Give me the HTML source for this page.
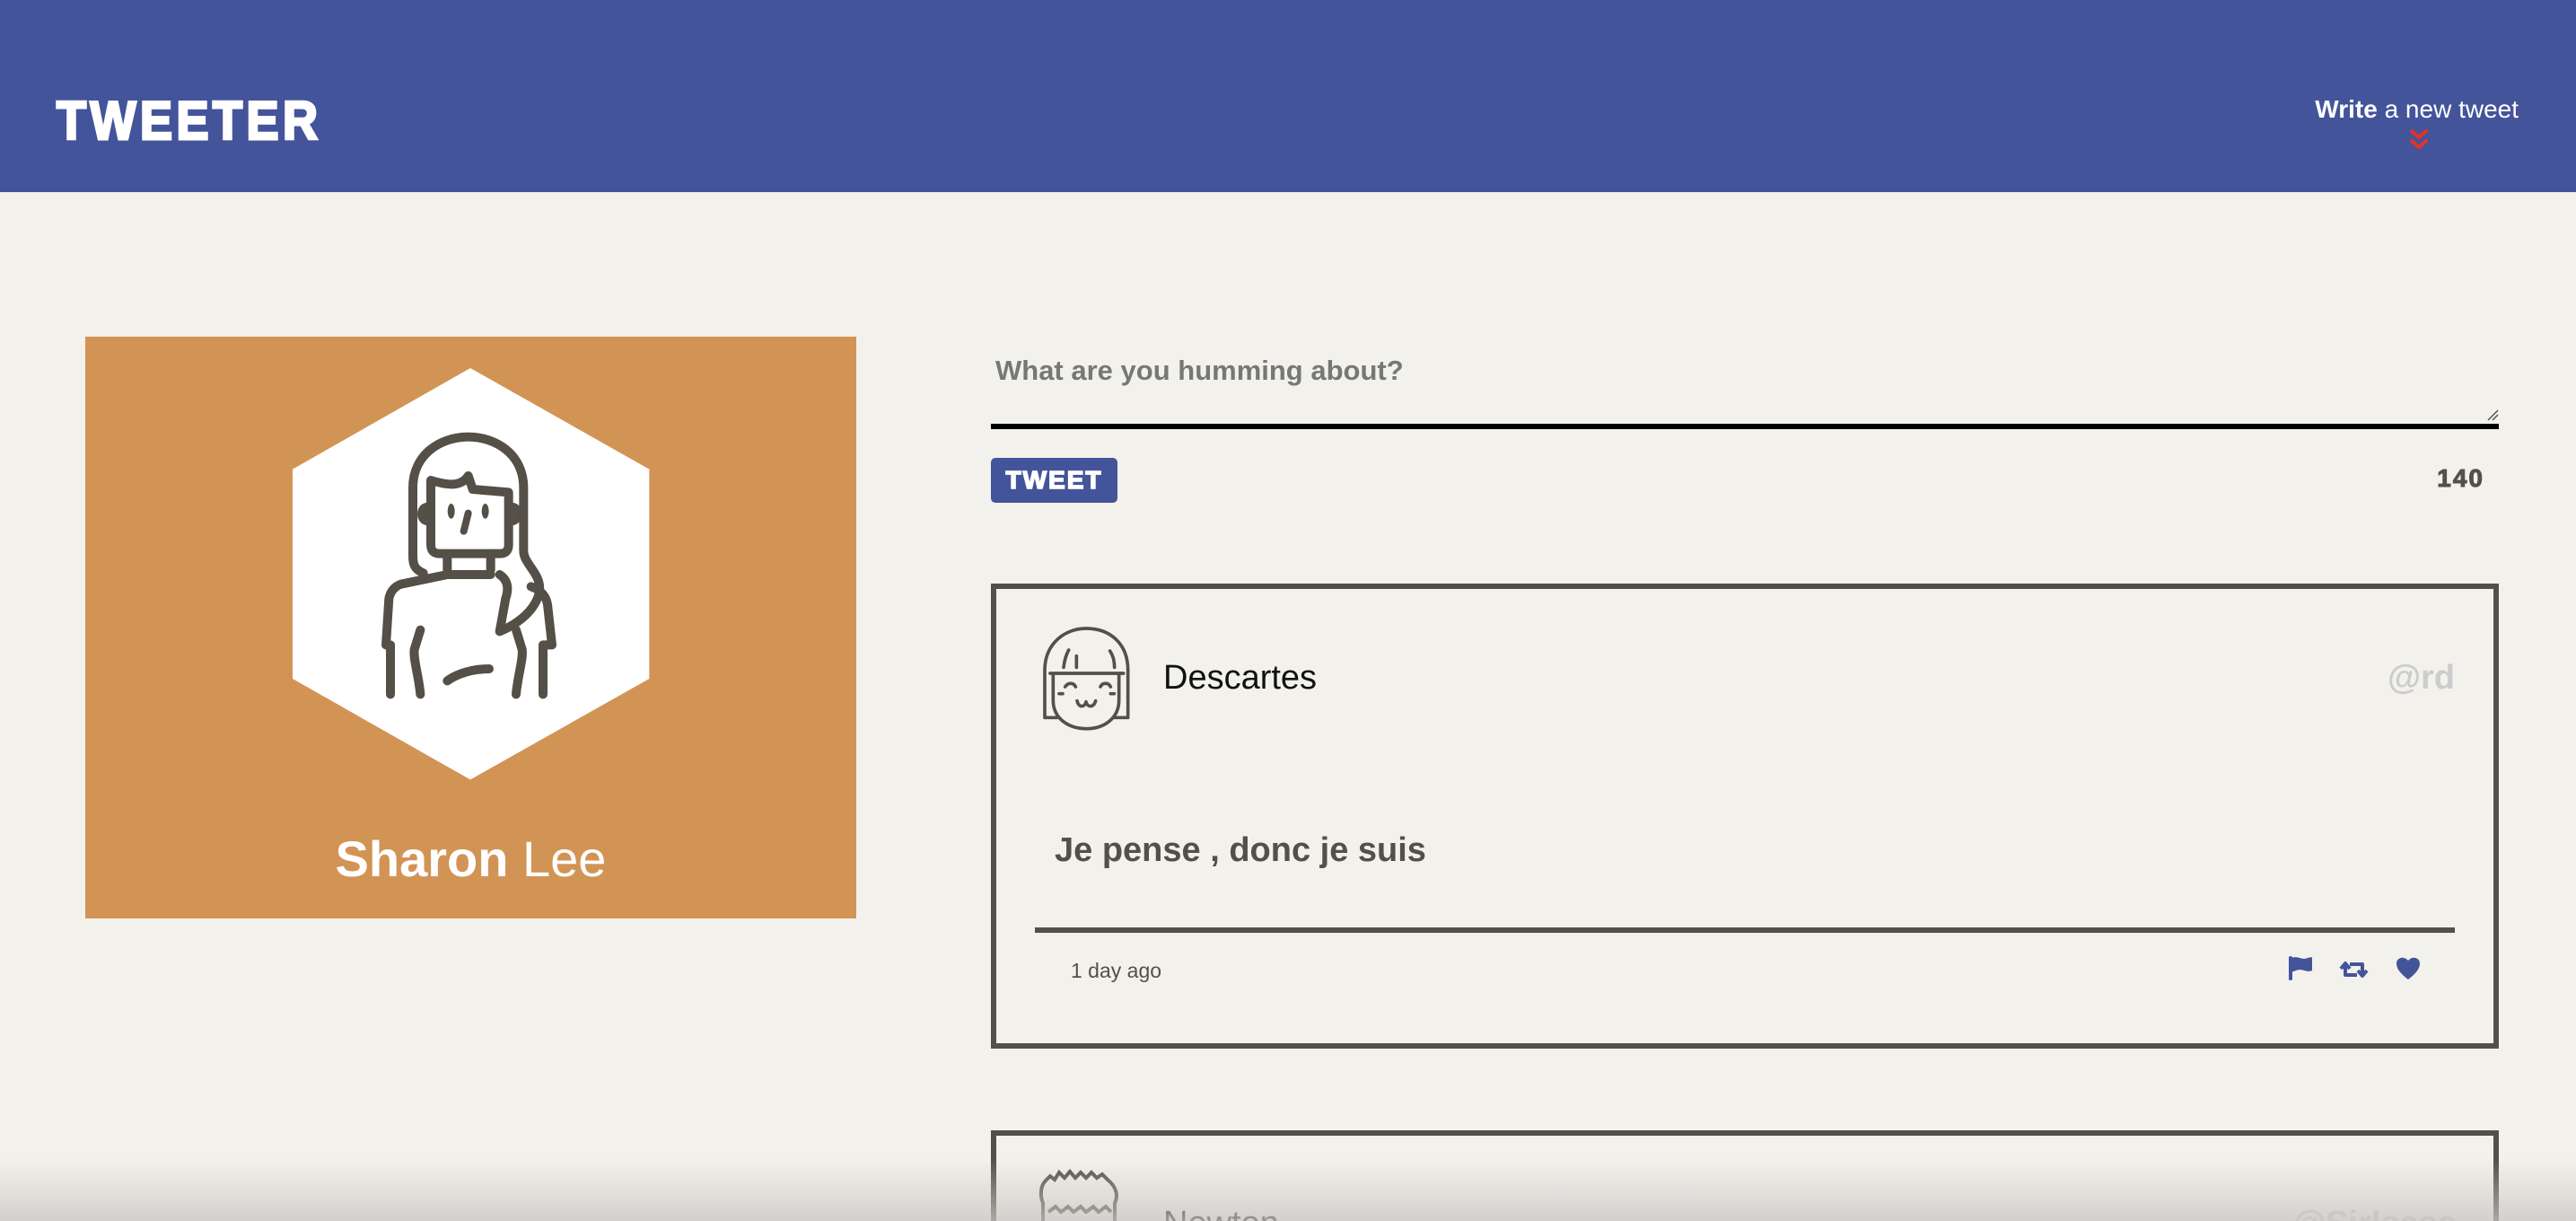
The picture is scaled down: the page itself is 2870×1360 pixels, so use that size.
<!DOCTYPE html>
<html><head><meta charset="utf-8">
<style>
*{margin:0;padding:0;box-sizing:border-box}
html,body{width:2870px;height:1360px;overflow:hidden;background:#f3f1ec;font-family:"Liberation Sans",sans-serif;position:relative}
.abs{position:absolute}
header{position:absolute;left:0;top:0;width:2870px;height:214px;background:#44549a}
.logo{left:63px;top:100px;font-size:60px;font-weight:900;color:#fff;letter-spacing:5px;-webkit-text-stroke:3px #fff;line-height:70px;transform:scaleX(0.9);transform-origin:left}
.write{right:64px;top:104px;font-size:28px;color:#fff;line-height:36px}
.card{left:95px;top:375px;width:859px;height:648px;background:#d29455}
.name{left:95px;width:859px;top:922px;text-align:center;color:#fff;font-size:56px;line-height:70px}
.ph{left:1109px;top:393px;font-size:31px;font-weight:bold;color:#777;line-height:40px}
.line{left:1104px;top:472px;width:1680px;height:6px;background:#000}
.btn{left:1104px;top:510px;width:141px;height:50px;background:#44549a;border-radius:5px;color:#fff;font-weight:900;font-size:28px;letter-spacing:2px;-webkit-text-stroke:1.5px #fff;text-align:center;line-height:50px}
.cnt{right:102px;top:515px;font-size:28px;font-weight:900;color:#545048;letter-spacing:2px;-webkit-text-stroke:1px #545048;line-height:36px}
.tw{left:1104px;width:1680px;border:6px solid #545048;background:#f3f1ec}
.uname{font-size:38px;color:#111;line-height:46px}
.handle{font-size:38px;font-weight:bold;color:#ccc;line-height:46px}
</style></head><body>
<header></header>
<div class="abs logo">TWEETER</div>
<div class="abs write"><b>Write</b> a new tweet</div>
<svg class="abs" style="left:2684px;top:143px" width="22" height="28" viewBox="0 0 22 28"><path d="M3 3l8 7 8-7M3 14l8 7 8-7" stroke="#e2332a" stroke-width="4" fill="none" stroke-linecap="round"/></svg>

<div class="abs card"></div>
<svg class="abs" style="left:300px;top:400px" width="460" height="480" viewBox="0 0 1380 1440">
<polygon points="672,30 1270,368 1270,1068 672,1405 78,1068 78,368" fill="#fff"/>
<g stroke="#545048" stroke-width="30" fill="none" stroke-linejoin="round" stroke-linecap="round">
<path d="M515,715 C480,700 480,680 480,650 V430 C480,320 570,260 665,260 C760,260 850,320 850,430 V640 C850,690 920,720 900,790 C880,850 820,890 770,910 L790,800 C800,770 800,740 770,720"/>
<path d="M540,405 V620 C540,640 550,650 570,650 H770 C790,650 800,640 800,620 V445 L680,435 L665,390 C640,430 590,420 540,405 Z"/>
<path d="M525,495 C505,500 505,535 525,540 M815,495 C835,500 835,535 815,540"/>
<path d="M595,650 V705 M740,650 V705"/>
<path d="M405,1120 V955 H390 L400,800 C405,775 420,760 440,752 L595,720 H740"/>
<path d="M875,760 C905,770 925,790 930,820 L945,955 H915 V1120"/>
<path d="M505,905 L485,970 C480,1000 500,1060 505,1120 M825,905 L845,970 C850,1000 830,1060 825,1120"/>
<path d="M595,1075 C630,1050 680,1035 735,1035"/>
</g>
<g fill="#545048"><ellipse cx="608" cy="508" rx="12" ry="25"/><ellipse cx="722" cy="508" rx="12" ry="25"/></g>
<path d="M665,515 L650,575" stroke="#545048" stroke-width="24" stroke-linecap="round"/>
</svg>
<div class="abs name"><b>Sharon</b> Lee</div>

<div class="abs ph">What are you humming about?</div>
<svg class="abs" style="left:2770px;top:455px" width="14" height="14"><path d="M2 13L13 2M7 13L13 7" stroke="#555" stroke-width="1.5"/></svg>
<div class="abs line"></div>
<div class="abs btn">TWEET</div>
<div class="abs cnt">140</div>

<div class="abs tw" style="top:650px;height:518px"></div>
<svg class="abs" style="left:1140px;top:680px" width="150" height="150" viewBox="0 0 450 450">
<g stroke="#545048" stroke-width="11" fill="none" stroke-linecap="round" stroke-linejoin="round">
<path d="M120,358 H72 V200 C72,110 140,60 210,60 C290,60 350,110 350,200 V358 H300"/>
<path d="M90,210 H335"/>
<path d="M100,212 V300 C100,360 150,395 212,395 C270,395 320,360 320,300 V212"/>
<path d="M135,190 C138,165 145,145 152,132 M178,190 V152 M290,135 C300,150 305,170 305,190"/>
<path d="M140,255 C150,240 168,240 175,255 M258,255 C265,240 285,240 292,255"/>
<path d="M120,278 H132 M292,278 H304"/>
<path d="M180,302 C185,325 205,325 210,305 C215,325 235,325 242,302"/>
</g></svg>
<div class="abs uname" style="left:1296px;top:732px">Descartes</div>
<div class="abs handle" style="right:135px;top:732px">@rd</div>
<div class="abs" style="left:1175px;top:922px;font-size:38px;font-weight:bold;color:#545048;line-height:50px">Je pense , donc je suis</div>
<div class="abs" style="left:1153px;top:1033px;width:1582px;height:6px;background:#545048"></div>
<div class="abs" style="left:1193px;top:1066px;font-size:23px;color:#545048;line-height:30px">1 day ago</div>
<svg class="abs" style="left:2548px;top:1062px" width="160" height="32" viewBox="0 0 160 32">
<g fill="#44549a">
<rect x="2" y="3" width="4" height="27" rx="2"/>
<path d="M5,5 C12,2 16,8 23,5 C26,4 28,4 28,5 V19 C22,22 17,16 10,19 C8,20 6,20 5,21 Z"/>
<path d="M135,29 C126,22 122,17 122,11 C122,5 130,2 135,8 C140,2 148,5 148,11 C148,17 144,22 135,29 Z"/>
</g>
<g stroke="#44549a" stroke-width="4" fill="none" stroke-linejoin="round">
<path d="M65,12 V24 H78 M60,17 L65,11 L70,17"/>
<path d="M70,12 H84 V24 M79,19 L84,25 L89,19"/>
</g>
</svg>

<div class="abs tw" style="top:1259px;height:101px;border-bottom:none"></div>
<svg class="abs" style="left:1150px;top:1300px" width="120" height="60" viewBox="0 0 120 60">
<g stroke="#545048" stroke-width="4" fill="none">
<path d="M12,70 V40 C8,30 10,20 15,15 L20,10 L25,14 L30,6 L36,12 L42,5 L48,12 L54,6 L60,12 L66,6 L72,12 L78,8 L84,14 C94,22 96,32 92,40 V70"/>
<path d="M18,50 L26,44 L32,50 L40,44 L46,50 L54,44 L60,50 L68,44 L74,50 L82,44 L88,50"/>
</g></svg>
<div class="abs" style="left:1296px;top:1330px;width:1480px;height:30px;overflow:hidden">
<div class="uname" style="position:absolute;left:0;top:10px">Newton</div>
<div class="handle" style="position:absolute;right:39px;top:10px">@SirIsaac</div>
</div>
<div class="abs" style="left:0;top:1290px;width:2870px;height:70px;background:linear-gradient(to bottom,rgba(200,198,194,0),rgba(200,198,194,0.75))"></div>
</body></html>
